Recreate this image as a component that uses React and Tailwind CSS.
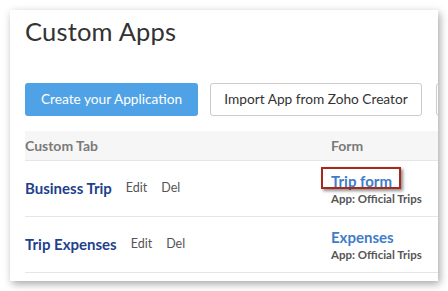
export default function App() {
  const font = { fontFamily: '"Lato", "Open Sans", sans-serif' };
  return (
    <div className="w-[448px] h-[291px] bg-white p-[10px]" style={font}>
      <div className="w-[428px] h-[271px] bg-white overflow-hidden shadow-[2px_3px_8px_rgba(0,0,0,0.35)] pl-[15px] pt-[1px]">
        <h1 className="text-[25.5px] leading-[40px] font-normal text-[#333] tracking-[0.2px]">Custom Apps</h1>
        <div className="mt-[32px] flex gap-[12px] whitespace-nowrap">
          <button className="w-[173px] h-[33px] shrink-0 rounded-[3px] bg-[#50a2e6] text-white text-[13.7px]">Create your Application</button>
          <button className="w-[212px] h-[33px] shrink-0 rounded-[3px] border border-[#cccccc] bg-white text-[#333] text-[13.7px]">Import App from Zoho Creator</button>
          <button className="w-[60px] h-[33px] shrink-0 rounded-[3px] border border-[#cccccc] bg-white ml-[2px]"></button>
        </div>
        <div className="mt-[15px]">
          <div className="grid grid-cols-[306px_1fr] h-[30px] items-center bg-[#f6f6f6] border-b border-[#e6e6e6] text-[14px] font-bold text-[#7a7a7a]">
            <div>Custom Tab</div>
            <div>Form</div>
          </div>
          <div className="grid grid-cols-[306px_1fr] h-[56px] items-center border-b border-[#e6e6e6]">
            <div className="flex items-center">
              <span className="text-[15px] font-bold text-[#223f8e]">Business Trip</span>
              <span className="ml-[14px] text-[12.5px] text-[#555]">Edit</span>
              <span className="ml-[14px] text-[12.5px] text-[#555]">Del</span>
            </div>
            <div className="flex flex-col">
              <div className="relative self-start text-[15px] leading-[18px]">
                <span className="font-bold text-[#3f7cc9]">Trip form</span>
                <div className="absolute left-[-10px] top-[-5px] w-[80px] h-[22px] border-2 border-[#a8291b] shadow-[2px_2px_3px_rgba(0,0,0,0.45)]"></div>
              </div>
              <span className="text-[11.5px] font-bold text-[#555] leading-[15px] mt-[1px]">App: Official Trips</span>
            </div>
          </div>
          <div className="grid grid-cols-[306px_1fr] h-[56px] items-center border-b border-[#e6e6e6]">
            <div className="flex items-center">
              <span className="text-[15px] font-bold text-[#223f8e]">Trip Expenses</span>
              <span className="ml-[14px] text-[12.5px] text-[#555]">Edit</span>
              <span className="ml-[14px] text-[12.5px] text-[#555]">Del</span>
            </div>
            <div className="flex flex-col">
              <span className="text-[15px] font-bold text-[#3f7cc9] leading-[18px]">Expenses</span>
              <span className="text-[11.5px] font-bold text-[#555] leading-[15px] mt-[1px]">App: Official Trips</span>
            </div>
          </div>
        </div>
      </div>
    </div>
  );
}
